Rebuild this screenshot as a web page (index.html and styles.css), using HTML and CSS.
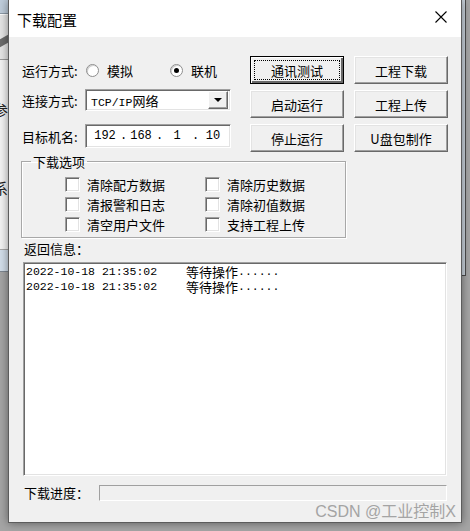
FILE: index.html
```html
<!DOCTYPE html>
<html lang="zh-CN">
<head>
  <meta charset="UTF-8" />
  <meta name="viewport" content="width=device-width, initial-scale=1.0">
  <title>下载配置</title>
  <link rel="stylesheet" href="styles.css">
</head>
<body>
  <div class="screen">

    <div class="bg-left">
      <div class="bg-tab"></div>
      <div class="bg-tool"><span class="gear"></span></div>
      <div class="bg-pane">
        <span class="bg-char">参</span>
        <span class="bg-char low">系</span>
      </div>
      <div class="bg-band"></div>
    </div>

    <div class="dialog">
      <div class="titlebar">
        <span class="title">下载配置</span>
        <span class="close">
          <svg width="12" height="12" viewBox="0 0 12 12"><path d="M0.5 0.5 L11.5 11.5 M11.5 0.5 L0.5 11.5" stroke="#000" stroke-width="1.1" fill="none"/></svg>
        </span>
      </div>

      <div class="content">
        <div class="top">
          <div class="fields">
            <div class="row row-mode">
              <span class="lbl">运行方式:</span>
              <span class="radio"><i></i>模拟</span>
              <span class="radio on"><i></i>联机</span>
            </div>
            <div class="row row-conn">
              <span class="lbl">连接方式:</span>
              <div class="select">
                <span class="select-text"><span class="mono">TCP/IP</span>网络</span>
                <span class="drop"><b></b></span>
              </div>
            </div>
            <div class="row row-ip">
              <span class="lbl">目标机名:</span>
              <div class="ip">
                <span class="oct">192</span><span class="dot">.</span>
                <span class="oct">168</span><span class="dot">.</span>
                <span class="oct">1</span><span class="dot">.</span>
                <span class="oct">10</span>
              </div>
            </div>
          </div>

          <div class="actions">
            <button class="btn focus">通讯测试</button>
            <button class="btn">工程下载</button>
            <button class="btn">启动运行</button>
            <button class="btn">工程上传</button>
            <button class="btn">停止运行</button>
            <button class="btn">U盘包制作</button>
          </div>
        </div>

        <fieldset class="group">
          <legend>下载选项</legend>
          <div class="checks">
            <span class="check"><i></i>清除配方数据</span>
            <span class="check"><i></i>清除历史数据</span>
            <span class="check"><i></i>清报警和日志</span>
            <span class="check"><i></i>清除初值数据</span>
            <span class="check"><i></i>清空用户文件</span>
            <span class="check"><i></i>支持工程上传</span>
          </div>
        </fieldset>

        <div class="log-label">返回信息：</div>
        <div class="log">
          <div class="log-line"><span class="time">2022-10-18 21:35:02</span><span class="msg">等待操作</span>......</div>
          <div class="log-line"><span class="time">2022-10-18 21:35:02</span><span class="msg">等待操作</span>......</div>
        </div>

        <div class="progress-row">
          <span class="progress-label">下载进度：</span>
          <div class="progress"></div>
        </div>

        <div class="watermark">CSDN @工业控制X</div>
      </div>
    </div>

    <div class="bg-right">
      <div class="bg-scroll"></div>
    </div>

  </div>
</body>
</html>
```

FILE: styles.css
```css
* {
  box-sizing: border-box;
}

body {
  margin: 0;
  background: #a5a5a5;
  font-family: "Noto Sans CJK SC", "Noto Sans", sans-serif;
  font-size: 13px;
  color: #000;
}

.screen {
  width: 470px;
  height: 531px;
  display: flex;
  overflow: hidden;
}

/* window behind the dialog */
.bg-left {
  width: 8px;
  flex-shrink: 0;
  display: flex;
  flex-direction: column;
}

.bg-tab {
  height: 14px;
  background: #bfcddb;
  border-bottom: 1px solid #8d9aa6;
}

.bg-tool {
  height: 46px;
  background: #e6e6e6;
  border-top: 1px solid #fff;
  border-bottom: 1px solid #9a9a9a;
  padding-top: 22px;
}

.gear {
  display: block;
  width: 8px;
  height: 8px;
  background: #6c6c6c;
  transform: skewY(-30deg);
}

.bg-pane {
  height: 190px;
  background: #f4f4f4;
  border-bottom: 1px solid #a8a8a8;
  display: flex;
  flex-direction: column;
  padding-top: 42px;
  overflow: hidden;
}

.bg-char {
  display: block;
  margin-left: -7px;
  font-size: 15px;
  line-height: 16px;
  color: #222;
}

.bg-char.low {
  margin-top: 62px;
}

.bg-band {
  height: 22px;
  background: #d3dfeb;
  border-bottom: 1px solid #7e8791;
}

.bg-right {
  flex: 1;
}

.bg-scroll {
  width: 4px;
  height: 276px;
  background: #ccd5de;
  border-right: 1px solid #4d4d4d;
  border-bottom: 1px solid #4d4d4d;
}

/* dialog */
.dialog {
  width: 454px;
  height: 523px;
  flex-shrink: 0;
  position: relative;
  z-index: 1;
  background: #f0f0f0;
  border: 1px solid #5c5c5c;
  border-top: none;
  box-shadow: 0 0 9px rgba(0, 0, 0, 0.45);
  display: flex;
  flex-direction: column;
  overflow: hidden;
}

.titlebar {
  height: 37px;
  flex-shrink: 0;
  background: #fff;
  display: flex;
  align-items: center;
  justify-content: space-between;
  padding: 0 14px 0 8px;
}

.title {
  font-size: 15px;
  line-height: 20px;
  margin-top: 2px;
}

.close {
  display: flex;
  margin-top: -3px;
}

.content {
  padding: 19px 13px 0 13px;
  display: flex;
  flex-direction: column;
}

.top {
  display: flex;
  justify-content: space-between;
  height: 96px;
}

.fields {
  width: 227px;
}

.row {
  display: flex;
  align-items: center;
}

.lbl {
  width: 63px;
  flex-shrink: 0;
}

.row-mode {
  height: 28px;
}

.row-conn {
  height: 22px;
  margin-top: 5px;
}

.row-ip {
  height: 24px;
  margin-top: 13px;
}

.radio {
  display: flex;
  align-items: center;
  gap: 8px;
  width: 84px;
  flex-shrink: 0;
  padding-left: 1px;
}

.radio i {
  width: 13px;
  height: 13px;
  border-radius: 50%;
  background: #fff;
  border: 1px solid #8e8e8e;
  box-shadow: inset 1px 1px 0 #cfcfcf;
  display: flex;
  align-items: center;
  justify-content: center;
}

.radio.on i::after {
  content: "";
  width: 5px;
  height: 5px;
  border-radius: 50%;
  background: #000;
}

.select,
.ip {
  width: 146px;
  flex-shrink: 0;
  height: 100%;
  background: #fff;
  border: 1px solid;
  border-color: #a0a0a0 #fff #fff #a0a0a0;
  box-shadow: inset 1px 1px 0 #696969, inset -1px -1px 0 #e3e3e3;
}

.select {
  display: flex;
  align-items: center;
  justify-content: space-between;
  padding: 2px 2px 2px 5px;
}

.mono {
  font-family: "Liberation Mono", monospace;
  font-size: 11.5px;
}

.drop {
  width: 20px;
  height: 18px;
  background: #f0f0f0;
  border: 1px solid;
  border-color: #fff #696969 #696969 #fff;
  box-shadow: inset -1px -1px 0 #a0a0a0;
  display: flex;
  align-items: center;
  justify-content: center;
}

.drop b {
  border-left: 4px solid transparent;
  border-right: 4px solid transparent;
  border-top: 4px solid #000;
}

.ip {
  display: flex;
  align-items: center;
  padding-left: 4px;
  font-family: "Liberation Mono", monospace;
  font-size: 12px;
}

.oct {
  width: 30px;
  text-align: center;
}

.dot {
  width: 6px;
  text-align: right;
}

.actions {
  display: grid;
  grid-template-columns: 94px 94px;
  grid-auto-rows: 28px;
  column-gap: 10px;
  row-gap: 6px;
}

.btn {
  font: inherit;
  color: #000;
  padding: 0;
  background: #f0f0f0;
  border: 1px solid;
  border-color: #fff #696969 #696969 #fff;
  box-shadow: inset -1px -1px 0 #a0a0a0, inset 1px 1px 0 #e3e3e3;
}

.btn.focus {
  border-color: #000;
  box-shadow: inset 1px 1px 0 #fff, inset -2px -2px 0 #696969;
  outline: 1px dotted #000;
  outline-offset: -5px;
}

/* options group */
.group {
  margin: 2px 0 0 -1px;
  width: 322px;
  height: 84px;
  padding: 0 0 0 43px;
  border: 1px solid #a8a8a8;
  box-shadow: inset 1px 1px 0 #fff, 1px 1px 0 #fff;
}

.group legend {
  margin-left: -34px;
  padding: 0 2px;
  line-height: 15px;
}

.checks {
  display: grid;
  grid-template-columns: 140px 140px;
  grid-auto-rows: 20px;
  margin-top: 5px;
}

.check {
  display: flex;
  align-items: center;
  gap: 7px;
}

.check i {
  width: 15px;
  height: 15px;
  background: #fff;
  border: 1px solid;
  border-color: #a0a0a0 #fff #fff #a0a0a0;
  box-shadow: inset 1px 1px 0 #696969, inset -1px -1px 0 #e3e3e3;
}

.log-label {
  margin: 3px 0 0 2px;
  line-height: 15px;
}

.log {
  margin: 6px 0 0 1px;
  width: 424px;
  height: 214px;
  background: #fff;
  border: 1px solid;
  border-color: #a0a0a0 #fff #fff #a0a0a0;
  box-shadow: inset 1px 1px 0 #696969, inset -1px -1px 0 #e3e3e3;
  padding: 2px 0 0 2px;
}

.log-line {
  display: flex;
  align-items: center;
  height: 14.5px;
  line-height: 14px;
  font-family: "Liberation Mono", monospace;
  font-size: 11.5px;
  white-space: pre;
}

.time {
  width: 160px;
}

.msg {
  font-family: "Noto Sans CJK SC", sans-serif;
  font-size: 13px;
  line-height: 14px;
}

.progress-row {
  display: flex;
  align-items: center;
  margin-top: 7px;
  padding-left: 2px;
}

.progress-label {
  width: 75px;
}

.progress {
  width: 348px;
  height: 16px;
  border: 1px solid;
  border-color: #a0a0a0 #fff #fff #a0a0a0;
  background: #f0f0f0;
}

.watermark {
  margin-right: -8px;
  text-align: right;
  font-family: "Liberation Sans", "Noto Sans CJK SC", sans-serif;
  font-size: 16px;
  line-height: 18px;
  color: #a4a4a4;
  margin-top: 1px;
}
```
